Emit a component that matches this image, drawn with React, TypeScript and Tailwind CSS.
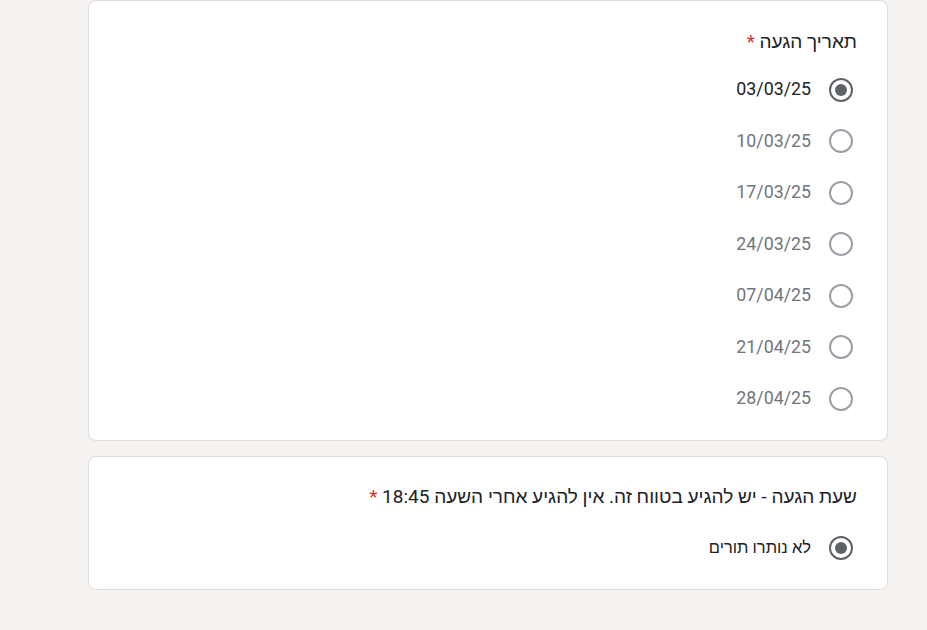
const dates = ["03/03/25", "10/03/25", "17/03/25", "24/03/25", "07/04/25", "21/04/25", "28/04/25"];

function Radio({ checked }: { checked: boolean }) {
  return (
    <span
      className={
        "flex h-[24px] w-[24px] shrink-0 items-center justify-center rounded-full border-2 " +
        (checked ? "border-[#5f6368]" : "border-[#9aa0a6]")
      }
    >
      {checked && <span className="h-[12px] w-[12px] rounded-full bg-[#5f6368]" />}
    </span>
  );
}

function Option({ label, checked, small }: { label: string; checked: boolean; small?: boolean }) {
  return (
    <div className="flex h-[51.5px] items-center gap-[18px]">
      <Radio checked={checked} />
      <span
        className={
          (small ? "text-[16.5px] " : "text-[17.8px] ") + (checked ? "text-[#202124]" : "text-[#70757a]")
        }
      >
        {label}
      </span>
    </div>
  );
}

function Title({ text }: { text: string }) {
  return (
    <div className="flex h-[26px] items-center text-[19px] text-[#202124]">
      <span>
        {text} <span className="text-[#d93025]">*</span>
      </span>
    </div>
  );
}

export default function App() {
  return (
    <div
      dir="rtl"
      className="min-h-[630px] w-full bg-[#f5f2ef] pl-[88px] pr-[39px]"
      style={{ fontFamily: "Roboto, 'Liberation Sans', Arial, sans-serif" }}
    >
      <div className="flex w-[800px] flex-col gap-[15px]">
        <div className="flex flex-col rounded-[8px] border border-[#dadce0] bg-white pb-[15px] pr-[30px] pt-[28px]">
          <Title text="תאריך הגעה" />
          <div className="mt-[9px] flex flex-col pr-[4px]">
            {dates.map((d, i) => (
              <Option key={d} label={d} checked={i === 0} />
            ))}
          </div>
        </div>
        <div className="flex flex-col rounded-[8px] border border-[#dadce0] bg-white pb-[15px] pr-[30px] pt-[28px]">
          <Title text="שעת הגעה - יש להגיע בטווח זה. אין להגיע אחרי השעה 18:45" />
          <div className="mt-[12px] flex flex-col pr-[4px]">
            <Option label="לא נותרו תורים" checked={true} small />
          </div>
        </div>
      </div>
    </div>
  );
}
